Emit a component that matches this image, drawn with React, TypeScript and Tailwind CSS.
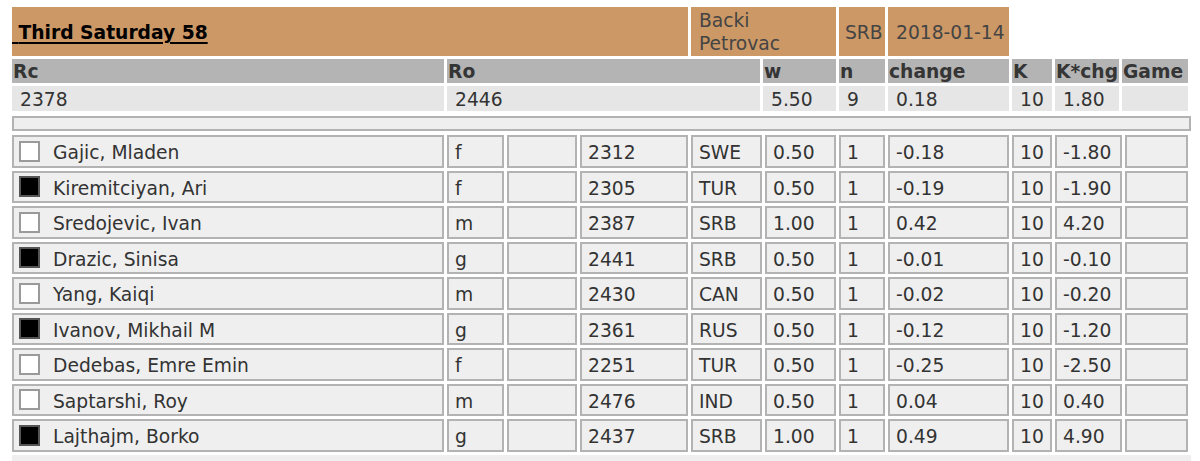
import React from 'react';

type Player = {
  name: string;
  black: boolean;
  title: string;
  rating: string;
  fed: string;
  w: string;
  chg: string;
  kchg: string;
};

const players: Player[] = [
  { name: 'Gajic, Mladen', black: false, title: 'f', rating: '2312', fed: 'SWE', w: '0.50', chg: '-0.18', kchg: '-1.80' },
  { name: 'Kiremitciyan, Ari', black: true, title: 'f', rating: '2305', fed: 'TUR', w: '0.50', chg: '-0.19', kchg: '-1.90' },
  { name: 'Sredojevic, Ivan', black: false, title: 'm', rating: '2387', fed: 'SRB', w: '1.00', chg: '0.42', kchg: '4.20' },
  { name: 'Drazic, Sinisa', black: true, title: 'g', rating: '2441', fed: 'SRB', w: '0.50', chg: '-0.01', kchg: '-0.10' },
  { name: 'Yang, Kaiqi', black: false, title: 'm', rating: '2430', fed: 'CAN', w: '0.50', chg: '-0.02', kchg: '-0.20' },
  { name: 'Ivanov, Mikhail M', black: true, title: 'g', rating: '2361', fed: 'RUS', w: '0.50', chg: '-0.12', kchg: '-1.20' },
  { name: 'Dedebas, Emre Emin', black: false, title: 'f', rating: '2251', fed: 'TUR', w: '0.50', chg: '-0.25', kchg: '-2.50' },
  { name: 'Saptarshi, Roy', black: false, title: 'm', rating: '2476', fed: 'IND', w: '0.50', chg: '0.04', kchg: '0.40' },
  { name: 'Lajthajm, Borko', black: true, title: 'g', rating: '2437', fed: 'SRB', w: '1.00', chg: '0.49', kchg: '4.90' },
];

const Cell: React.FC<{ w: string; children?: React.ReactNode }> = ({ w, children }) => (
  <div className={`${w} shrink-0 flex items-center border-2 border-[#b3b3b3] bg-[#efefef] pl-[6px] pt-[4px]`}>{children}</div>
);

const Head: React.FC<{ w: string; children?: React.ReactNode }> = ({ w, children }) => (
  <div className={`${w} shrink-0 flex items-center bg-[#b4b4b4] pl-[1px] pt-[2px] font-bold text-[#353535]`}>{children}</div>
);

const Val: React.FC<{ w: string; children?: React.ReactNode }> = ({ w, children }) => (
  <div className={`${w} shrink-0 flex items-center bg-[#e6e6e6] pl-[8px] pt-[3px]`}>{children}</div>
);

export default function App() {
  return (
    <div className="w-[1200px] h-[461px] overflow-hidden bg-white pt-[7px] pl-[12px] font-['DejaVu_Sans',Verdana,sans-serif] text-[18.7px] text-[#333]">
      {/* tournament line */}
      <div className="flex gap-[3px] h-[49px]">
        <div className="w-[676px] flex items-center bg-[#cc9866] pt-[4px] font-bold text-black">
          <span className="underline decoration-2 underline-offset-[3px]">{'\u00a0'}Third Saturday 58</span>
        </div>
        <div className="w-[145px] flex flex-col justify-center bg-[#cc9866] pl-[8px] leading-[23px] text-[#444]">
          <span>Backi</span>
          <span>Petrovac</span>
        </div>
        <div className="w-[46px] flex items-center bg-[#cc9866] pl-[6px] pt-[4px] text-[#444]">SRB</div>
        <div className="w-[121px] flex items-center bg-[#cc9866] pl-[8px] pt-[4px] text-[#444]">2018-01-14</div>
      </div>

      {/* header */}
      <div className="flex gap-[3px] h-[24px] mt-[3px]">
        <Head w="w-[432px]">Rc</Head>
        <Head w="w-[313px]">Ro</Head>
        <Head w="w-[73px]">w</Head>
        <Head w="w-[46px]">n</Head>
        <Head w="w-[121px]">change</Head>
        <Head w="w-[40px]">K</Head>
        <Head w="w-[64px]">K*chg</Head>
        <Head w="w-[66px]">Game</Head>
      </div>

      <div className="flex gap-[3px] h-[25px] mt-[3px]">
        <Val w="w-[432px]">2378</Val>
        <Val w="w-[313px]">2446</Val>
        <Val w="w-[73px]">5.50</Val>
        <Val w="w-[46px]">9</Val>
        <Val w="w-[121px]">0.18</Val>
        <Val w="w-[40px]">10</Val>
        <Val w="w-[64px]">1.80</Val>
        <Val w="w-[66px]"></Val>
      </div>

      <div className="w-[1179px] h-[15px] mt-[5px] border-2 border-[#b3b3b3] bg-[#efefef]" />

      {/* games */}
      <div className="flex flex-col gap-[3px] mt-[4px]">
        {players.map((p) => (
          <div key={p.name} className="flex gap-[3px] h-[32.5px]">
            <div className="w-[432px] shrink-0 flex items-center border-2 border-[#b3b3b3] bg-[#efefef] pl-[5px]">
              <span
                className={`w-[21px] h-[21px] border-2 ${p.black ? 'bg-black border-[#555]' : 'bg-white border-[#9a9a9a]'}`}
              />
              <span className="ml-[13px] pt-[4px]">{p.name}</span>
            </div>
            <Cell w="w-[57px]">{p.title}</Cell>
            <Cell w="w-[70px]"></Cell>
            <Cell w="w-[108px]">{p.rating}</Cell>
            <Cell w="w-[71px]">{p.fed}</Cell>
            <Cell w="w-[71px]">{p.w}</Cell>
            <Cell w="w-[46px]">1</Cell>
            <Cell w="w-[121px]">{p.chg}</Cell>
            <Cell w="w-[40px]">10</Cell>
            <Cell w="w-[67px]">{p.kchg}</Cell>
            <Cell w="w-[63px]"></Cell>
          </div>
        ))}
      </div>

      <div className="w-[1179px] h-[20px] mt-[3px] bg-[#efefef]" />
    </div>
  );
}
